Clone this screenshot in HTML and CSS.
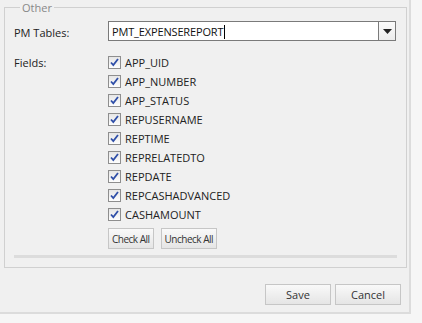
FILE: index.html
```html
<!DOCTYPE html>
<html lang="en">
<head>
    <meta charset="UTF-8">
    <title>Other</title>
    <link rel="stylesheet" href="styles.css">
</head>
<body>
    <div class="panel">
        <fieldset class="group">
            <legend>Other</legend>
            <div class="row">
                <label class="label">PM Tables:</label>
                <div class="combo">
                    <div class="combo-text">PMT_EXPENSEREPORT<span class="caret"></span></div>
                    <div class="combo-btn">
                        <svg width="9" height="5" viewBox="0 0 9 5"><path d="M0 0h9L4.5 5z" fill="#222"/></svg>
                    </div>
                </div>
            </div>
            <div class="row fields-row">
                <label class="label">Fields:</label>
                <div class="fields">
                    <label class="check"><span class="box"><svg width="9" height="9" viewBox="0 0 9 9"><path d="M1 4.5l2.3 2.6L8 1" fill="none" stroke="#2f4fa8" stroke-width="1.8"/></svg></span>APP_UID</label>
                    <label class="check"><span class="box"><svg width="9" height="9" viewBox="0 0 9 9"><path d="M1 4.5l2.3 2.6L8 1" fill="none" stroke="#2f4fa8" stroke-width="1.8"/></svg></span>APP_NUMBER</label>
                    <label class="check"><span class="box"><svg width="9" height="9" viewBox="0 0 9 9"><path d="M1 4.5l2.3 2.6L8 1" fill="none" stroke="#2f4fa8" stroke-width="1.8"/></svg></span>APP_STATUS</label>
                    <label class="check"><span class="box"><svg width="9" height="9" viewBox="0 0 9 9"><path d="M1 4.5l2.3 2.6L8 1" fill="none" stroke="#2f4fa8" stroke-width="1.8"/></svg></span>REPUSERNAME</label>
                    <label class="check"><span class="box"><svg width="9" height="9" viewBox="0 0 9 9"><path d="M1 4.5l2.3 2.6L8 1" fill="none" stroke="#2f4fa8" stroke-width="1.8"/></svg></span>REPTIME</label>
                    <label class="check"><span class="box"><svg width="9" height="9" viewBox="0 0 9 9"><path d="M1 4.5l2.3 2.6L8 1" fill="none" stroke="#2f4fa8" stroke-width="1.8"/></svg></span>REPRELATEDTO</label>
                    <label class="check"><span class="box"><svg width="9" height="9" viewBox="0 0 9 9"><path d="M1 4.5l2.3 2.6L8 1" fill="none" stroke="#2f4fa8" stroke-width="1.8"/></svg></span>REPDATE</label>
                    <label class="check"><span class="box"><svg width="9" height="9" viewBox="0 0 9 9"><path d="M1 4.5l2.3 2.6L8 1" fill="none" stroke="#2f4fa8" stroke-width="1.8"/></svg></span>REPCASHADVANCED</label>
                    <label class="check"><span class="box"><svg width="9" height="9" viewBox="0 0 9 9"><path d="M1 4.5l2.3 2.6L8 1" fill="none" stroke="#2f4fa8" stroke-width="1.8"/></svg></span>CASHAMOUNT</label>
                    <div class="small-actions">
                        <button class="btn small">Check All</button>
                        <button class="btn small">Uncheck All</button>
                    </div>
                </div>
            </div>
            <div class="separator"></div>
        </fieldset>
        <div class="footer">
            <button class="btn">Save</button>
            <button class="btn">Cancel</button>
        </div>
    </div>
</body>
</html>
```

FILE: styles.css
```css
body {
    margin: 0;
    background-color: #f6f6f6;
    font-family: "Open Sans", "Noto Sans", sans-serif;
    font-size: 11px;
    color: #222;
}

.panel {
    width: 411px;
    height: 314px;
    box-sizing: border-box;
    background-color: #f0f0f0;
    border-right: 2px solid #dcdcdc;
    border-bottom: 2px solid #dcdcdc;
}

.group {
    margin: 0 4px;
    padding: 6px 9px 9px 9px;
    border: 1px solid #d0d0d0;
    width: 403px;
    height: 268px;
    box-sizing: border-box;
}

.group legend {
    color: #888;
    padding: 0 2px;
    margin-left: 6px;
}

.row {
    display: flex;
}

.label {
    width: 94px;
    padding-top: 4px;
}

.fields-row {
    margin-top: 12px;
}

.fields-row .label {
    padding-top: 0;
    line-height: 19px;
}

.combo {
    display: flex;
    width: 288px;
    height: 20px;
    box-sizing: border-box;
    border: 1px solid #7a7a7a;
    background-color: #fff;
}

.combo-text {
    flex: 1;
    padding: 2px 3px;
    letter-spacing: -0.15px;
    color: #111;
}

.caret {
    display: inline-block;
    width: 1px;
    height: 14px;
    margin-left: 1px;
    background-color: #000;
    vertical-align: -3px;
}

.combo-btn {
    width: 16px;
    border-left: 1px solid #7a7a7a;
    background: linear-gradient(#fbfbfb, #ececec);
    display: flex;
    align-items: center;
    justify-content: center;
}

.fields {
    display: flex;
    flex-direction: column;
}

.check {
    display: flex;
    align-items: center;
    height: 19px;
}

.box {
    width: 11px;
    height: 11px;
    border: 1px solid #8e8e8e;
    background: linear-gradient(#e6e6e6, #fdfdfd);
    margin-right: 4px;
    display: flex;
    align-items: center;
    justify-content: center;
}

.small-actions {
    display: flex;
    gap: 7px;
    margin-top: 4px;
}

.btn {
    font-family: inherit;
    font-size: 11px;
    color: #333;
    border: 1px solid #c6c6c6;
    background: linear-gradient(#f9f9f9, #e5e5e5);
    height: 21px;
    width: 66px;
    padding: 0;
}

.btn.small {
    width: auto;
    padding: 0 3px;
    font-size: 10px;
    letter-spacing: -0.5px;
}

.separator {
    margin-top: 6px;
    height: 3px;
    background-color: #dcdcdc;
}

.footer {
    display: flex;
    justify-content: flex-end;
    gap: 4px;
    padding: 16px 8px 0 0;
}
```
